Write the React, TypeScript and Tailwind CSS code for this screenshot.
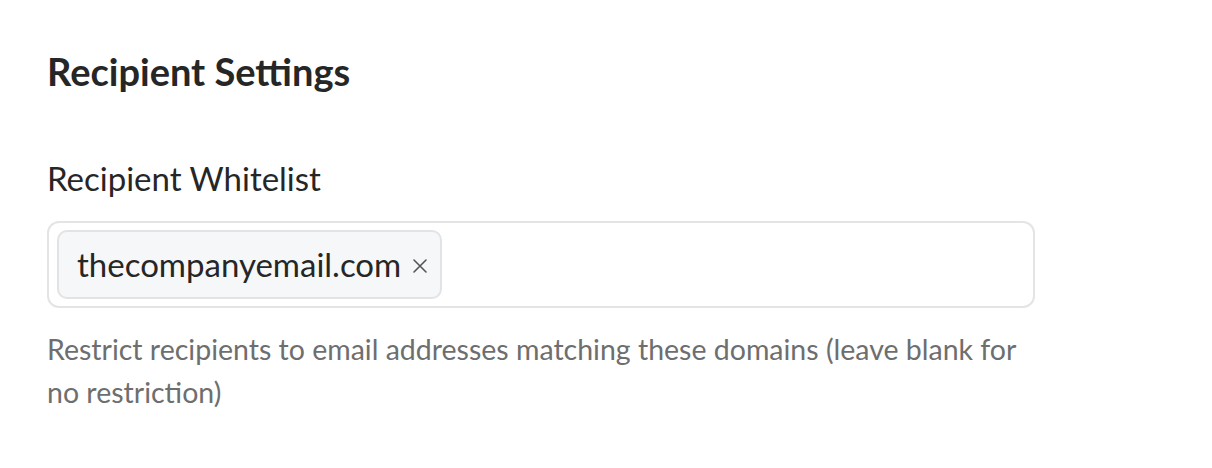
import React from "react";

export default function App() {
  return (
    <div className="w-[1212px] h-[468px] bg-white" style={{ fontFamily: "Lato, 'Noto Sans', sans-serif" }}>
      <div className="pl-[47px] pt-[46px]">
        <h2 className="text-[38px] leading-[50px] font-bold text-[#262626]">Recipient Settings</h2>
        <div className="mt-[60px] text-[33px] leading-[44px] text-[#262626]">Recipient Whitelist</div>
        <div className="mt-[21px] w-[988px] h-[87px] border-2 border-[#e4e4e4] rounded-[12px] flex items-center px-[8px]">
          <div className="h-[69px] flex items-center gap-[11px] pl-[18px] pr-[12px] bg-[#f6f7f9] border-2 border-[#e2e3e5] rounded-[10px]">
            <span className="text-[33px] text-[#262626]">thecompanyemail.com</span>
            <svg width="16" height="16" viewBox="0 0 16 16" className="mt-[2px]">
              <path d="M2 2L14 14M14 2L2 14" stroke="#555" strokeWidth="1.6" strokeLinecap="round" />
            </svg>
          </div>
        </div>
        <p className="mt-[20px] w-[975px] text-[28.5px] leading-[43px] text-[#6e6e6e]">
          Restrict recipients to email addresses matching these domains (leave blank for no restriction)
        </p>
      </div>
    </div>
  );
}
